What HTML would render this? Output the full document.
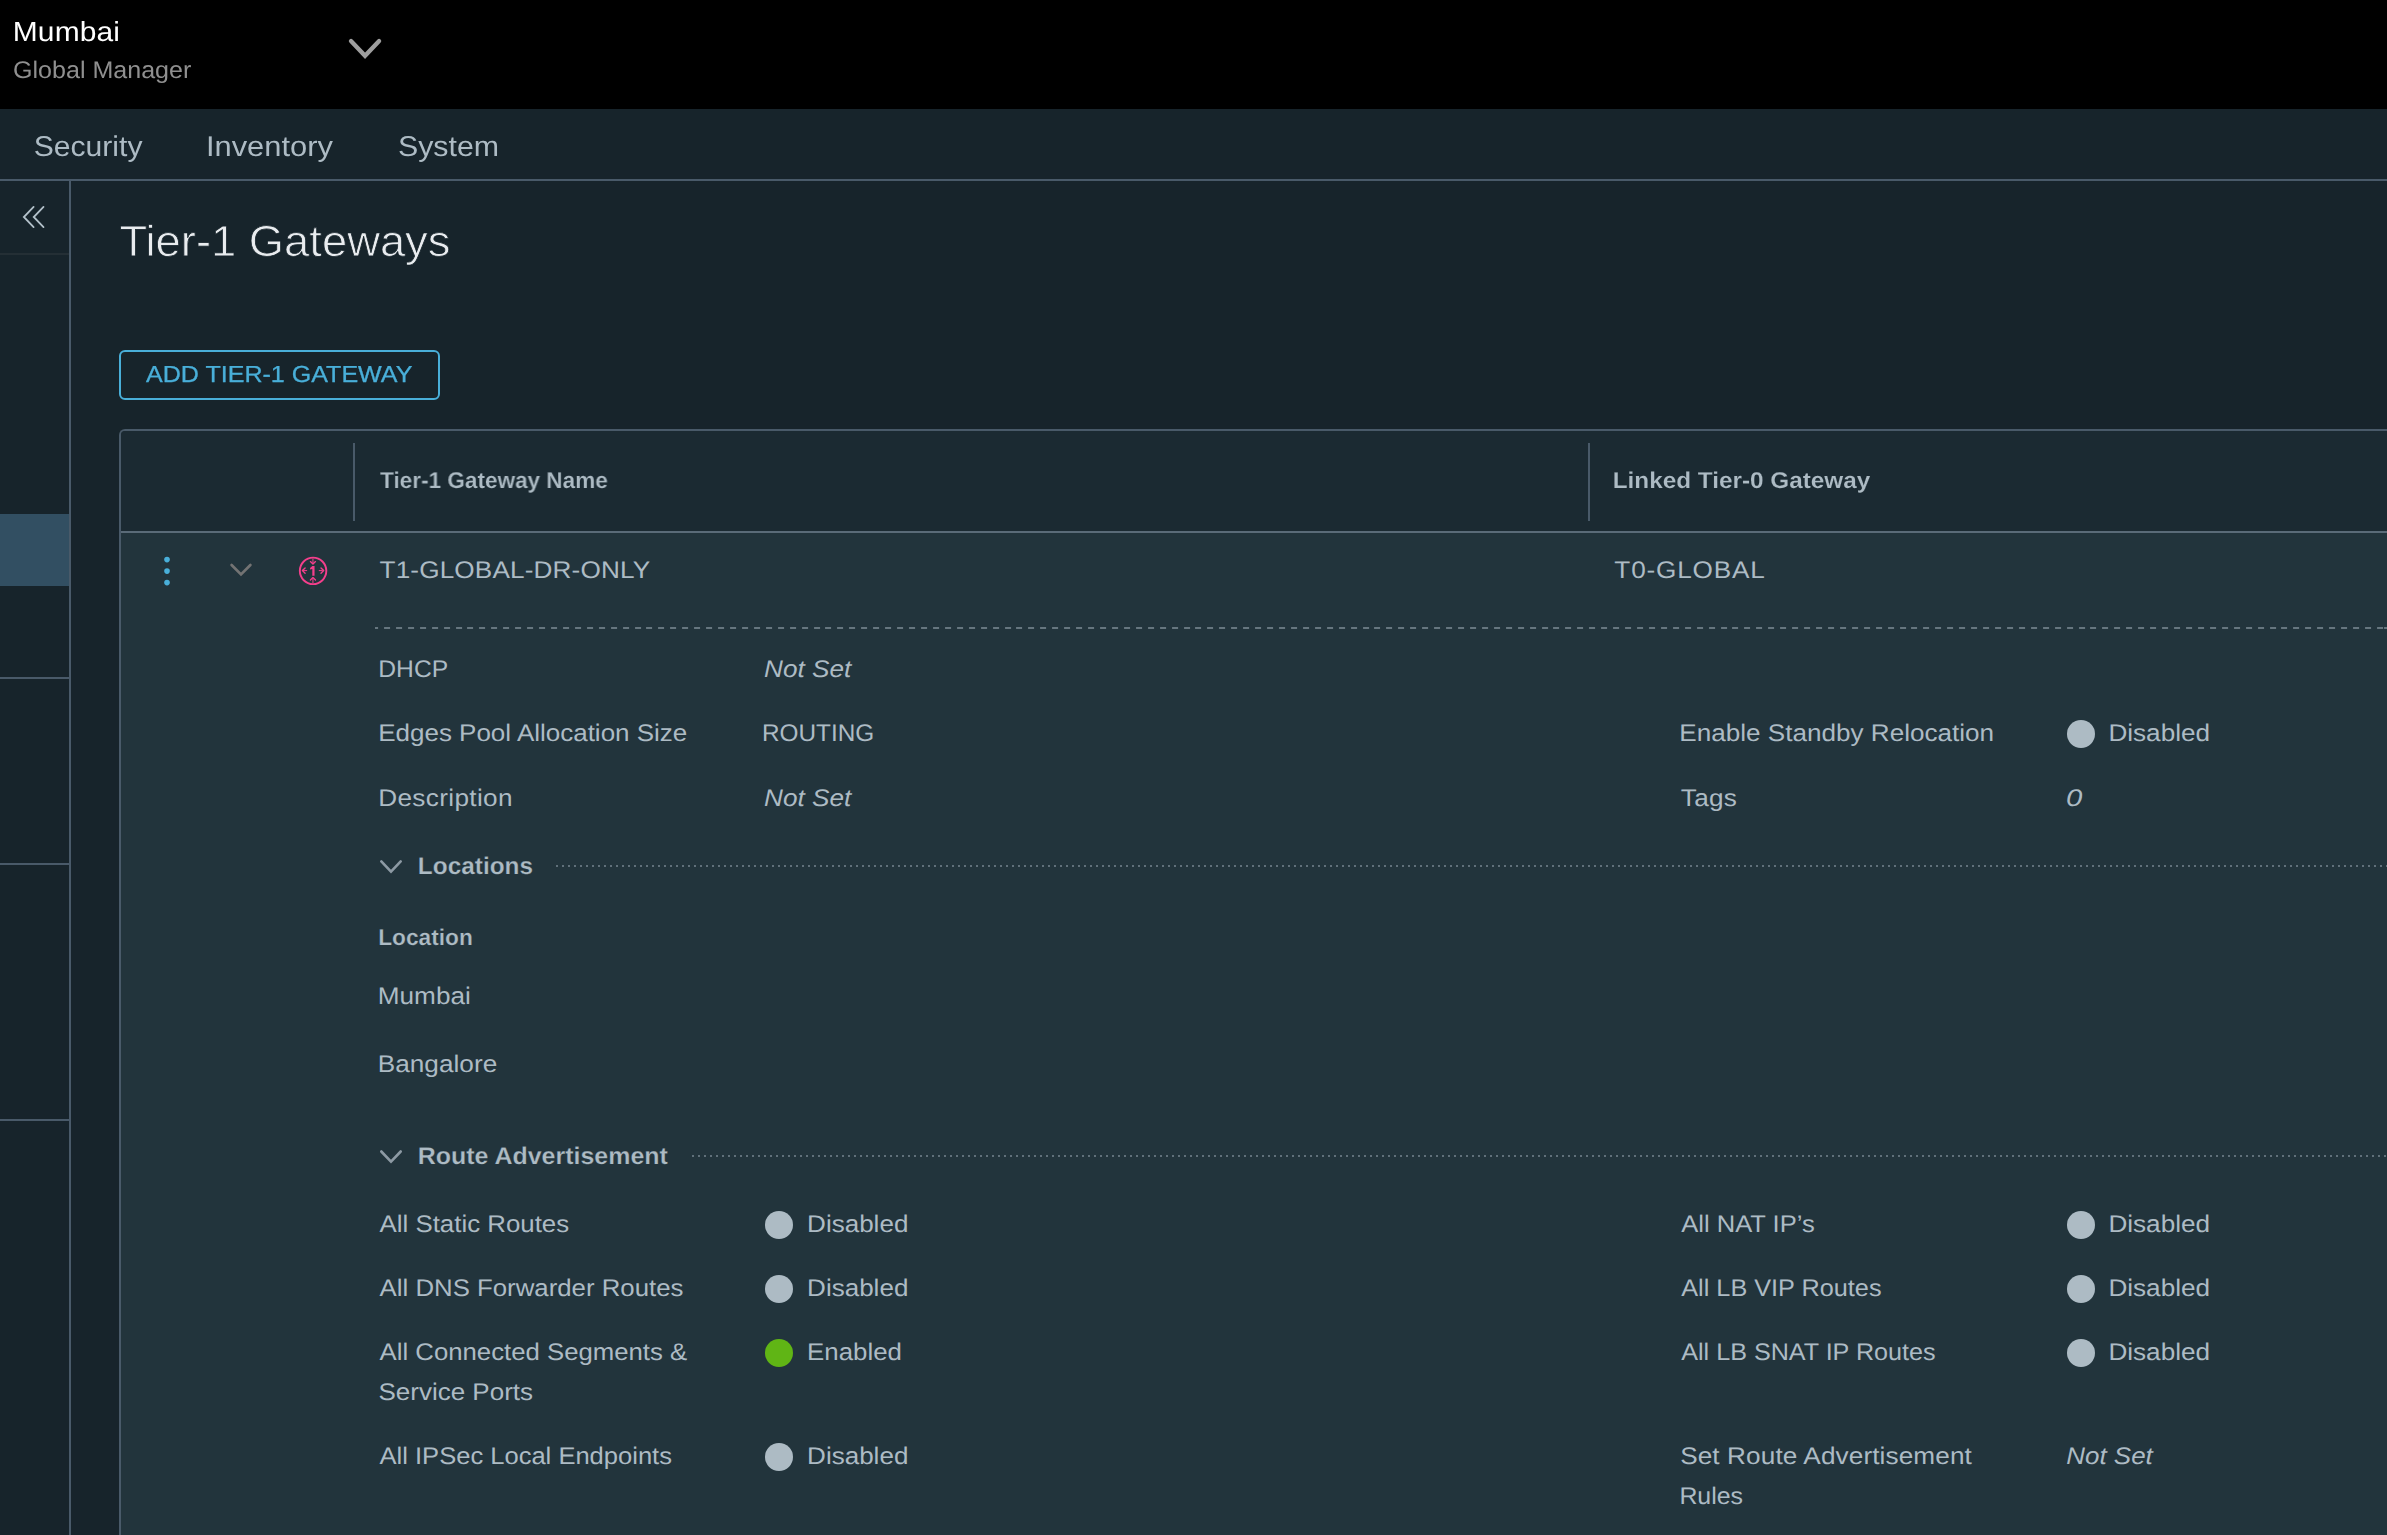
<!DOCTYPE html>
<html lang="en"><head><meta charset="utf-8"><title>Tier-1 Gateways</title>
<style>
html,body{margin:0;padding:0;width:2387px;height:1535px;overflow:hidden;}
body{width:2387px;height:1535px;overflow:hidden;position:relative;background:#17242b;font-family:"Liberation Sans",sans-serif;}
header,nav,aside,main,section,h1{display:contents;margin:0;font:inherit;}
.t{position:absolute;white-space:nowrap;display:block;text-rendering:geometricPrecision;transform-origin:0 0;}
.b{position:absolute;display:block;}
.d{position:absolute;display:block;width:28.4px;height:28.4px;border-radius:50%;}
svg{position:absolute;overflow:visible;pointer-events:none;}
</style></head><body>

<header>
<div class="b" style="left:0;top:0;width:2387px;height:109px;background:#000"></div>
<span class="t" style="left:12px;top:18px;letter-spacing:0.107px;color:#ffffff;font-size:27.5px;line-height:27.5px;will-change:transform;transform:translateX(0.76px) scaleX(1.0900);">Mumbai</span>
<span class="t" style="left:13px;top:59px;letter-spacing:0.000px;color:#8f8f8f;font-size:24px;line-height:24px;will-change:transform;transform:translateX(0.04px) scaleX(1.0438);">Global Manager</span>
<svg width="50" height="40" viewBox="340 30 50 40" style="left:340px;top:30px" fill="none" stroke-linecap="round" stroke-linejoin="round" aria-hidden="true"><polyline points="351.0,41.0 365.05,55.85 379.1,41.0" stroke="#9e9e9e" stroke-width="4.3" stroke-linejoin="miter"/></svg>
</header>

<nav>
<div class="b" style="left:0;top:179px;width:2387px;height:2px;background:#495a69"></div>
<span class="t" style="left:33px;top:133px;letter-spacing:0.000px;color:#adbbc4;font-size:28.5px;line-height:28.5px;will-change:transform;transform:translateX(0.68px) scaleX(1.0570);">Security</span>
<span class="t" style="left:205px;top:133px;letter-spacing:0.000px;color:#adbbc4;font-size:28.5px;line-height:28.5px;will-change:transform;transform:translateX(0.94px) scaleX(1.0832);">Inventory</span>
<span class="t" style="left:397px;top:133px;letter-spacing:0.000px;color:#adbbc4;font-size:28.5px;line-height:28.5px;will-change:transform;transform:translateX(0.97px) scaleX(1.0645);">System</span>
</nav>

<aside>
<div class="b" style="left:69px;top:181px;width:2px;height:1354px;background:#495a69"></div>
<div class="b" style="left:0;top:253px;width:69px;height:2px;background:#242f35"></div>
<div class="b" style="left:0;top:514px;width:69px;height:72px;background:#324f62"></div>
<div class="b" style="left:0;top:677px;width:69px;height:2px;background:#495a69"></div>
<div class="b" style="left:0;top:863px;width:69px;height:2px;background:#495a69"></div>
<div class="b" style="left:0;top:1119px;width:69px;height:2px;background:#495a69"></div>
<svg width="40" height="38" viewBox="14 198 40 38" style="left:14px;top:198px" fill="none" stroke-linecap="round" stroke-linejoin="round" aria-hidden="true"><g stroke="#b3c1ca" stroke-width="1.8" stroke-linejoin="miter"><polyline points="33.6,206.9 23.85,217 33.6,227.1"/><polyline points="43.5,206.9 33.75,217 43.5,227.1"/></g></svg>
</aside>

<main>
<h1><span class="t" style="left:119px;top:221px;letter-spacing:0.000px;color:#e9ecef;font-size:43.6px;line-height:43.6px;will-change:transform;-webkit-text-stroke:0.8px #17242b;transform:translateX(0.50px) scaleX(1.0402);">Tier-1 Gateways</span></h1>
<div class="b" role="button" style="left:119px;top:350px;width:317px;height:46px;border:2px solid #49afd9;border-radius:6px"></div>
<span class="t" style="left:145px;top:363px;letter-spacing:-0.000px;color:#49afd9;font-size:23.2px;line-height:23.2px;will-change:transform;-webkit-text-stroke:0.3px #49afd9;transform:translateX(0.95px) scaleX(1.0810);">ADD TIER-1 GATEWAY</span>

<section>
<div class="b" style="left:119px;top:429px;width:2266px;height:1104px;border:solid #495a69;border-width:2px 0 0 2px;border-radius:6px 0 0 0;background:#22343c;overflow:hidden">
  <div class="b" style="left:0;top:0;width:2266px;height:100px;background:#1b2a32"></div>
  <div class="b" style="left:0;top:100px;width:2266px;height:2px;background:#5a6b78"></div>
  <div class="b" style="left:232px;top:12px;width:2px;height:78px;background:#495a69"></div>
  <div class="b" style="left:1467px;top:12px;width:2px;height:78px;background:#495a69"></div>
</div>
<span class="t" style="left:380px;top:469px;letter-spacing:0.000px;color:#adbbc4;font-size:22.8px;line-height:22.8px;font-weight:bold;will-change:transform;-webkit-text-stroke:0.15px #1b2a32;transform:translateX(0.05px) scaleX(0.9893);">Tier-1 Gateway Name</span>
<span class="t" style="left:1612px;top:469px;letter-spacing:-0.000px;color:#adbbc4;font-size:22.8px;line-height:22.8px;font-weight:bold;will-change:transform;-webkit-text-stroke:0.15px #1b2a32;transform:translateX(0.70px) scaleX(1.0660);">Linked Tier-0 Gateway</span>
<span class="t" style="left:379px;top:559px;letter-spacing:0.121px;color:#adbbc4;font-size:24px;line-height:24px;transform:translateX(0.55px) scaleX(1.0900);">T1-GLOBAL-DR-ONLY</span>
<span class="t" style="left:1614px;top:559px;letter-spacing:0.735px;color:#adbbc4;font-size:24px;line-height:24px;transform:translateX(0.35px) scaleX(1.0900);">T0-GLOBAL</span>
<svg width="200" height="46" viewBox="150 548 200 46" style="left:150px;top:548px" fill="none" stroke-linecap="round" stroke-linejoin="round" aria-hidden="true">
  <g fill="#49afd9" stroke="none"><circle cx="167" cy="559.6" r="2.8"/><circle cx="167" cy="571.1" r="2.8"/><circle cx="167" cy="582.6" r="2.8"/></g>
  <polyline points="231.6,565 241,574.4 250.4,565" stroke="#737373" stroke-width="2.7" stroke-linejoin="miter"/>
  <g stroke="#f43f8c" stroke-width="1.9"><circle cx="313.07" cy="570.87" r="13.25"/></g>
  <path d="M312.3 566.1H314.55V575.7H312.3V569.0L310.1 569.45V567.9Z" fill="#f43f8c" stroke="none"/>
  <g stroke="#f43f8c" stroke-width="1.0" stroke-linecap="butt"><path d="M312.95 558.6V563.6M312.95 583.1V578.1"/><path d="M307.1 570.6H303M318.8 570.6H322.9"/></g>
  <g stroke="#f43f8c" stroke-width="1.35"><path d="M310.4 561.6L312.95 564.1L315.5 561.6"/><path d="M310.4 580.1L312.95 577.6L315.5 580.1"/><path d="M305.1 567.9L302.4 570.6L305.1 573.3"/><path d="M321.0 567.9L323.7 570.6L321.0 573.3"/></g>
</svg>
<svg width="34" height="28" viewBox="374 852 34 28" style="left:374px;top:852px" fill="none" stroke-linecap="round" stroke-linejoin="round" aria-hidden="true"><polyline points="381.3,861.4 391,871.6 400.7,861.4" stroke="#8d9aa4" stroke-width="2.6" stroke-linejoin="miter"/></svg>
<svg width="34" height="28" viewBox="374 1142 34 28" style="left:374px;top:1142px" fill="none" stroke-linecap="round" stroke-linejoin="round" aria-hidden="true"><polyline points="381.3,1151.5 391,1161.7 400.7,1151.5" stroke="#8d9aa4" stroke-width="2.6" stroke-linejoin="miter"/></svg>
<div class="b" style="left:375px;top:627px;width:2012px;height:2px;background:repeating-linear-gradient(90deg,#66767f 0,#66767f 6px,transparent 6px,transparent 11.934px);background-position:-2.93px 0"></div>
<div class="b" style="left:556px;top:865px;width:1831px;height:2px;background:repeating-linear-gradient(90deg,#60707a 0,#60707a 2px,transparent 2px,transparent 6px)"></div>
<div class="b" style="left:692px;top:1155px;width:1695px;height:2px;background:repeating-linear-gradient(90deg,#60707a 0,#60707a 2px,transparent 2px,transparent 6px)"></div>
<i class="d" style="left:2066.7px;top:719.7px;background:#adbbc4"></i><i class="d" style="left:764.8px;top:1210.7px;background:#adbbc4"></i><i class="d" style="left:764.8px;top:1274.7px;background:#adbbc4"></i><i class="d" style="left:764.8px;top:1338.7px;background:#60b515"></i><i class="d" style="left:764.8px;top:1442.7px;background:#adbbc4"></i><i class="d" style="left:2066.7px;top:1210.7px;background:#adbbc4"></i><i class="d" style="left:2066.7px;top:1274.7px;background:#adbbc4"></i><i class="d" style="left:2066.7px;top:1338.7px;background:#adbbc4"></i>
<span class="t" style="left:378px;top:658px;letter-spacing:0.000px;color:#adbbc4;font-size:24px;line-height:24px;transform:translateX(0.30px) scaleX(1.0267);">DHCP</span>
<span class="t" style="left:763px;top:658px;letter-spacing:0.024px;color:#adbbc4;font-size:24px;line-height:24px;font-style:italic;transform:translateX(0.98px) scaleX(1.0900);">Not Set</span>
<span class="t" style="left:378px;top:722px;letter-spacing:0.000px;color:#adbbc4;font-size:24px;line-height:24px;transform:translateX(0.19px) scaleX(1.0827);">Edges Pool Allocation Size</span>
<span class="t" style="left:761px;top:722px;letter-spacing:0.000px;color:#adbbc4;font-size:24px;line-height:24px;transform:translateX(0.93px) scaleX(1.0143);">ROUTING</span>
<span class="t" style="left:1679px;top:722px;letter-spacing:0.000px;color:#adbbc4;font-size:24px;line-height:24px;transform:translateX(0.28px) scaleX(1.0873);">Enable Standby Relocation</span>
<span class="t" style="left:2108px;top:722px;letter-spacing:0.000px;color:#adbbc4;font-size:24px;line-height:24px;transform:translateX(0.38px) scaleX(1.0888);">Disabled</span>
<span class="t" style="left:378px;top:787px;letter-spacing:0.318px;color:#adbbc4;font-size:24px;line-height:24px;transform:translateX(0.18px) scaleX(1.0900);">Description</span>
<span class="t" style="left:763px;top:787px;letter-spacing:0.024px;color:#adbbc4;font-size:24px;line-height:24px;font-style:italic;transform:translateX(0.98px) scaleX(1.0900);">Not Set</span>
<span class="t" style="left:1680px;top:787px;letter-spacing:0.192px;color:#adbbc4;font-size:24px;line-height:24px;transform:translateX(0.85px) scaleX(1.0900);">Tags</span>
<span class="t" style="left:2065px;top:787px;letter-spacing:0.000px;color:#adbbc4;font-size:24px;line-height:24px;font-style:italic;transform:translateX(0.97px) scaleX(1.2200);">0</span>
<span class="t" style="left:417px;top:855px;letter-spacing:-0.000px;color:#adbbc4;font-size:24px;line-height:24px;font-weight:bold;-webkit-text-stroke:0.25px #22343c;transform:translateX(0.85px) scaleX(1.0161);">Locations</span>
<span class="t" style="left:378px;top:926px;letter-spacing:0.000px;color:#adbbc4;font-size:22.8px;line-height:22.8px;font-weight:bold;-webkit-text-stroke:0.25px #22343c;transform:translateX(0.20px) scaleX(0.9963);">Location</span>
<span class="t" style="left:377px;top:985px;letter-spacing:0.029px;color:#adbbc4;font-size:24px;line-height:24px;transform:translateX(0.68px) scaleX(1.0900);">Mumbai</span>
<span class="t" style="left:377px;top:1053px;letter-spacing:0.035px;color:#adbbc4;font-size:24px;line-height:24px;transform:translateX(0.68px) scaleX(1.0900);">Bangalore</span>
<span class="t" style="left:417px;top:1145px;letter-spacing:0.000px;color:#adbbc4;font-size:24px;line-height:24px;font-weight:bold;-webkit-text-stroke:0.25px #22343c;transform:translateX(0.71px) scaleX(1.0403);">Route Advertisement</span>
<span class="t" style="left:379px;top:1213px;letter-spacing:0.000px;color:#adbbc4;font-size:24px;line-height:24px;transform:translateX(0.55px) scaleX(1.0766);">All Static Routes</span>
<span class="t" style="left:379px;top:1277px;letter-spacing:0.000px;color:#adbbc4;font-size:24px;line-height:24px;transform:translateX(0.55px) scaleX(1.0746);">All DNS Forwarder Routes</span>
<span class="t" style="left:379px;top:1341px;letter-spacing:0.000px;color:#adbbc4;font-size:24px;line-height:24px;transform:translateX(0.55px) scaleX(1.0725);">All Connected Segments &amp;</span>
<span class="t" style="left:378px;top:1381px;letter-spacing:0.000px;color:#adbbc4;font-size:24px;line-height:24px;transform:translateX(0.46px) scaleX(1.0832);">Service Ports</span>
<span class="t" style="left:379px;top:1445px;letter-spacing:0.000px;color:#adbbc4;font-size:24px;line-height:24px;transform:translateX(0.55px) scaleX(1.0640);">All IPSec Local Endpoints</span>
<span class="t" style="left:1681px;top:1213px;letter-spacing:0.000px;color:#adbbc4;font-size:24px;line-height:24px;transform:translateX(0.25px) scaleX(1.0645);">All NAT IP’s</span>
<span class="t" style="left:1681px;top:1277px;letter-spacing:0.000px;color:#adbbc4;font-size:24px;line-height:24px;transform:translateX(0.25px) scaleX(1.0524);">All LB VIP Routes</span>
<span class="t" style="left:1681px;top:1341px;letter-spacing:0.000px;color:#adbbc4;font-size:24px;line-height:24px;transform:translateX(0.25px) scaleX(1.0476);">All LB SNAT IP Routes</span>
<span class="t" style="left:1680px;top:1445px;letter-spacing:0.096px;color:#adbbc4;font-size:24px;line-height:24px;transform:translateX(0.15px) scaleX(1.0900);">Set Route Advertisement</span>
<span class="t" style="left:1679px;top:1485px;letter-spacing:0.000px;color:#adbbc4;font-size:24px;line-height:24px;transform:translateX(0.38px) scaleX(1.0380);">Rules</span>
<span class="t" style="left:2066px;top:1445px;letter-spacing:0.000px;color:#adbbc4;font-size:24px;line-height:24px;font-style:italic;transform:translateX(0.29px) scaleX(1.0807);">Not Set</span>
<span class="t" style="left:807px;top:1213px;letter-spacing:0.000px;color:#adbbc4;font-size:24px;line-height:24px;transform:translateX(0.09px) scaleX(1.0843);">Disabled</span>
<span class="t" style="left:807px;top:1277px;letter-spacing:0.000px;color:#adbbc4;font-size:24px;line-height:24px;transform:translateX(0.09px) scaleX(1.0843);">Disabled</span>
<span class="t" style="left:807px;top:1341px;letter-spacing:0.000px;color:#adbbc4;font-size:24px;line-height:24px;transform:translateX(0.11px) scaleX(1.0766);">Enabled</span>
<span class="t" style="left:807px;top:1445px;letter-spacing:0.000px;color:#adbbc4;font-size:24px;line-height:24px;transform:translateX(0.09px) scaleX(1.0843);">Disabled</span>
<span class="t" style="left:2108px;top:1213px;letter-spacing:0.000px;color:#adbbc4;font-size:24px;line-height:24px;transform:translateX(0.38px) scaleX(1.0888);">Disabled</span>
<span class="t" style="left:2108px;top:1277px;letter-spacing:0.000px;color:#adbbc4;font-size:24px;line-height:24px;transform:translateX(0.38px) scaleX(1.0888);">Disabled</span>
<span class="t" style="left:2108px;top:1341px;letter-spacing:0.000px;color:#adbbc4;font-size:24px;line-height:24px;transform:translateX(0.38px) scaleX(1.0888);">Disabled</span>
</section>
</main>
</body></html>
